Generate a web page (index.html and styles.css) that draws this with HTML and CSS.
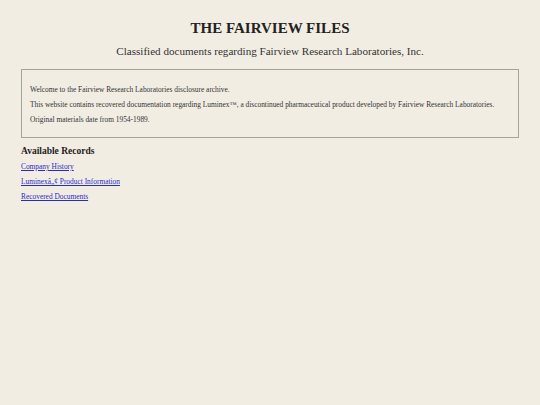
FILE: index.html
```html
<!DOCTYPE html>
<html>
<head>
<meta charset="utf-8">
<link rel="stylesheet" href="styles.css">
</head>
<body>
<header class="masthead">
  <h1 class="title">THE FAIRVIEW FILES</h1>
  <p class="subtitle">Classified documents regarding Fairview Research Laboratories, Inc.</p>
</header>
<section class="notice">
  <p>Welcome to the Fairview Research Laboratories disclosure archive.</p>
  <p>This website contains recovered documentation regarding Luminex™, a discontinued pharmaceutical product developed by Fairview Research Laboratories.</p>
  <p>Original materials date from 1954-1989.</p>
</section>
<section class="records">
  <h2 class="records-title">Available Records</h2>
  <ul class="record-list">
    <li><a href="#">Company History</a></li>
    <li><a href="#">Luminexâ„¢ Product Information</a></li>
    <li><a href="#">Recovered Documents</a></li>
  </ul>
</section>
</body>
</html>
```
FILE: styles.css
```css
html, body {
  margin: 0;
  background: #f2ede3;
}
body {
  padding: 0 21px;
  font-family: "Liberation Serif", serif;
  color: #333;
}
.masthead {
  text-align: center;
  padding-top: 19px;
}
.title {
  margin: 0;
  font-size: 15px;
  line-height: 18px;
  color: #222;
  font-weight: bold;
}
.subtitle {
  margin: 7px 0 0;
  font-size: 11.1px;
  line-height: 14px;
  color: #333;
}
.notice {
  margin-top: 11px;
  border: 1px solid #a8a297;
  padding: 12px 8px 10px;
}
.notice p {
  margin: 0;
  font-size: 7.4px;
  line-height: 15px;
  color: #333;
}
.records {
  margin-top: 7px;
}
.records-title {
  margin: 0;
  font-size: 9.5px;
  line-height: 12px;
  color: #222;
}
.record-list {
  list-style: none;
  margin: 2px 0 0;
  padding: 0;
}
.record-list li {
  font-size: 7.4px;
  line-height: 15px;
}
.record-list a {
  color: #2b2bc4;
}
```
